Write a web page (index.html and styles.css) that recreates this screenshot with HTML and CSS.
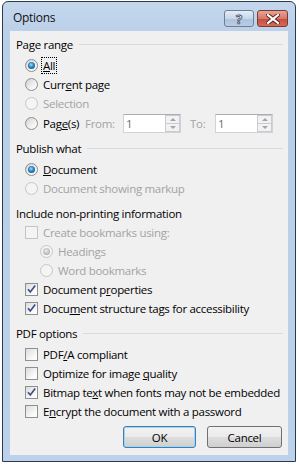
FILE: index.html
```html
<!DOCTYPE html>
<html lang="en">
<head>
    <meta charset="UTF-8">
    <title>Options</title>
    <link rel="stylesheet" href="styles.css">
</head>
<body>
    <div class="window">
        <div class="titlebar">
            <span class="title">Options</span>
            <div class="caption">
                <span class="cap help">?</span>
                <span class="cap close">
                    <svg width="14" height="10" viewBox="0 0 14 10">
                        <path d="M2 1 L12 9 M12 1 L2 9" stroke="#5a1f1a" stroke-width="4" stroke-linecap="square"/>
                        <path d="M2 1 L12 9 M12 1 L2 9" stroke="#fff" stroke-width="2.2" stroke-linecap="square"/>
                    </svg>
                </span>
            </div>
        </div>

        <div class="client">
            <!-- Page range -->
            <div class="group">
                <div class="group-title"><span>Page range</span><i></i></div>
                <div class="opt"><span class="radio checked"></span><span class="label focus"><u>A</u>ll</span></div>
                <div class="opt"><span class="radio"></span><span class="label">Curr<u>e</u>nt page</span></div>
                <div class="opt off"><span class="radio"></span><span class="label">Selection</span></div>
                <div class="opt pages">
                    <span class="radio"></span>
                    <span class="label w-pages">Pag<u>e</u>(s)</span>
                    <span class="dim w-from">From:</span>
                    <span class="spin"><span class="val">1</span><span class="arrows"><b class="up"></b><b class="down"></b></span></span>
                    <span class="dim w-to">To:</span>
                    <span class="spin"><span class="val">1</span><span class="arrows"><b class="up"></b><b class="down"></b></span></span>
                </div>
            </div>

            <!-- Publish what -->
            <div class="group">
                <div class="group-title"><span>Publish what</span><i></i></div>
                <div class="opt"><span class="radio checked"></span><span class="label"><u>D</u>ocument</span></div>
                <div class="opt off"><span class="radio"></span><span class="label">Document showing markup</span></div>
            </div>

            <!-- Non-printing -->
            <div class="group tight">
                <div class="group-title"><span>Include non-printing information</span></div>
                <div class="opt off"><span class="check"></span><span class="label">Create bookmarks using:</span></div>
                <div class="opt sub off"><span class="radio checked"></span><span class="label">Headings</span></div>
                <div class="opt sub off"><span class="radio"></span><span class="label">Word bookmarks</span></div>
                <div class="opt"><span class="check on"><svg width="11" height="11" viewBox="0 0 11 11"><path d="M2 5.2 L4.3 8 L9.2 1.6" fill="none" stroke="#3c4f86" stroke-width="1.7"/></svg></span><span class="label">Document p<u>r</u>operties</span></div>
                <div class="opt"><span class="check on"><svg width="11" height="11" viewBox="0 0 11 11"><path d="M2 5.2 L4.3 8 L9.2 1.6" fill="none" stroke="#3c4f86" stroke-width="1.7"/></svg></span><span class="label">Docu<u>m</u>ent structure tags for accessibility</span></div>
            </div>

            <!-- PDF options -->
            <div class="group">
                <div class="group-title"><span>PDF options</span><i></i></div>
                <div class="opt"><span class="check"></span><span class="label">PDF<u>/</u>A compliant</span></div>
                <div class="opt"><span class="check"></span><span class="label">Optimize for image <u>q</u>uality</span></div>
                <div class="opt"><span class="check on"><svg width="11" height="11" viewBox="0 0 11 11"><path d="M2 5.2 L4.3 8 L9.2 1.6" fill="none" stroke="#3c4f86" stroke-width="1.7"/></svg></span><span class="label">Bitmap te<u>x</u>t when fonts may not be embedded</span></div>
                <div class="opt"><span class="check"></span><span class="label">E<u>n</u>crypt the document with a password</span></div>
            </div>

            <div class="buttons">
                <span class="btn default">OK</span>
                <span class="btn cancel">Cancel</span>
            </div>
        </div>
    </div>
</body>
</html>
```

FILE: styles.css
```css
body {
    margin: 0;
    background: #fff;
    font-family: 'Open Sans', 'Noto Sans', sans-serif;
    font-size: 11.5px;
    letter-spacing: -0.3px;
    color: #000;
}

.window {
    margin: 1px 3px 0 2px;
    border: 1px solid #2b3a4c;
    border-radius: 6px 6px 0 0;
    background: linear-gradient(#c3d6ec, #b9cfe8 40px, #bcd2ea);
    padding: 0 7px 6px 7px;
}

.titlebar {
    display: flex;
    height: 29px;
    margin: 0 -7px;
    padding: 0 7px 0 10px;
}

.title {
    font-size: 12px;
    line-height: 31px;
    color: #111;
}

.caption {
    display: flex;
    gap: 3px;
    margin-left: auto;
    margin-top: 8px;
}

.cap {
    display: flex;
    align-items: center;
    justify-content: center;
    height: 15px;
    border: 1px solid #6d7f96;
    border-radius: 3px;
}

.help {
    width: 28px;
    background: linear-gradient(#e4edf7, #c7d6e8 50%, #aec3dc 51%, #b9cde3);
    color: #fff;
    font-weight: bold;
    font-size: 13px;
    letter-spacing: 0;
    -webkit-text-stroke: 0.8px #3a4d66;
}

.close {
    width: 29px;
    border-color: #7a3a33;
    background: linear-gradient(#e6a595, #d7786a 50%, #c74b3c 51%, #d66a55);
}

.client {
    background: #f0f0f0;
    height: 424px;
    box-sizing: border-box;
    padding: 3px 5px 0 0;
}

.group {
    margin-bottom: 5px;
}

.group-title {
    display: flex;
    align-items: center;
    height: 20px;
    padding-left: 6px;
}

.group-title i {
    flex: 1;
    height: 1px;
    background: #d5dbe0;
    margin-left: 6px;
}

.opt {
    display: flex;
    align-items: center;
    height: 19px;
    padding-left: 15px;
}

.group-title + .opt {
    margin-top: 2px;
}

.tight .group-title + .opt {
    margin-top: 0;
}

.opt.sub {
    padding-left: 30px;
}

.opt.off .label,
.dim {
    color: #a3a3a3;
}

.label {
    margin-left: 5px;
    white-space: nowrap;
}

.focus {
    outline: 1px dotted #000;
    outline-offset: 0;
    padding: 0 1px;
    margin-left: 4px;
}

.radio {
    position: relative;
    width: 13px;
    height: 13px;
    box-sizing: border-box;
    border-radius: 50%;
    border: 1px solid #8d8d8d;
    background: linear-gradient(135deg, #d2d2d2, #f6f6f6 70%);
    flex: none;
}

.radio.checked::after {
    content: '';
    position: absolute;
    left: 2px;
    top: 2px;
    width: 7px;
    height: 7px;
    border-radius: 50%;
    background: radial-gradient(circle at 45% 40%, #9be0ff, #2a83c0 45%, #103e66);
}

.off .radio {
    border-color: #c6c6c6;
    background: #f4f4f4;
}

.off .radio.checked::after {
    background: radial-gradient(circle at 45% 40%, #eee, #b9b9b9 60%, #a3a3a3);
}

.check {
    display: flex;
    align-items: center;
    justify-content: center;
    width: 13px;
    height: 13px;
    box-sizing: border-box;
    border: 1px solid #8e8f8f;
    background: linear-gradient(135deg, #dcdcdc, #fbfbfb 75%);
    flex: none;
}

.off .check {
    border-color: #c4c4c4;
    background: #f4f4f4;
}

.pages {
    height: 20px;
}

.w-pages {
    width: 42px;
}

.w-from {
    width: 38px;
}

.w-to {
    width: 25px;
    margin-left: 9px;
}

.spin {
    display: flex;
    width: 58px;
    height: 19px;
    box-sizing: border-box;
    border: 1px solid #d0d3d9;
    border-top-color: #abadb3;
    background: #fff;
}

.val {
    flex: 1;
    color: #6d6d6d;
    padding-left: 2px;
    line-height: 17px;
}

.arrows {
    display: flex;
    flex-direction: column;
    width: 15px;
}

.arrows b {
    flex: 1;
    border: 1px solid #c9cbd0;
    background: #f2f2f2;
    position: relative;
}

.arrows b.down {
    border-top: none;
}

.arrows b::after {
    content: '';
    position: absolute;
    left: 4px;
    border-left: 3px solid transparent;
    border-right: 3px solid transparent;
}

.arrows b.up::after {
    top: 2px;
    border-bottom: 3px solid #a4a4a4;
}

.arrows b.down::after {
    top: 2px;
    border-top: 3px solid #a4a4a4;
}

.buttons {
    display: flex;
    justify-content: flex-end;
    gap: 11px;
    margin-top: 0;
    padding-right: 1px;
}

.btn {
    display: flex;
    align-items: center;
    justify-content: center;
    height: 22px;
    box-sizing: border-box;
    border: 1px solid #707070;
    border-radius: 3px;
    background: linear-gradient(#f2f2f2, #ebebeb 50%, #dddddd 51%, #cfcfcf);
}

.btn.default {
    width: 73px;
    border-color: #3c7fb1;
    box-shadow: inset 0 0 0 1px #9fd6f5;
}

.btn.cancel {
    width: 75px;
}
```
